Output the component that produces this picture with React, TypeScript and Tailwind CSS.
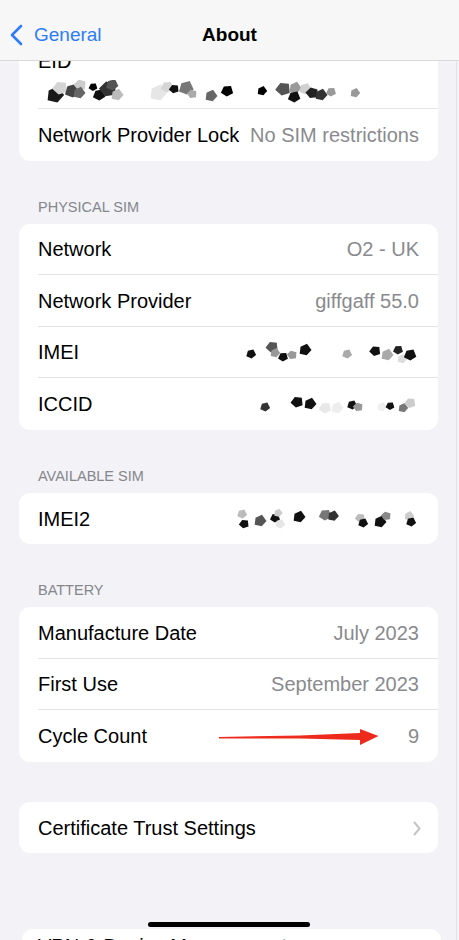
import type { ReactNode } from "react"

type Blob = [number, number, number, string, number]

const font = { fontFamily: '"Liberation Sans", Arial, sans-serif' }

function pentagon(cx: number, cy: number, r: number, rot: number) {
  const pts: string[] = []
  for (let i = 0; i < 5; i++) {
    const a = ((rot + i * 72) * Math.PI) / 180
    const rr = i % 2 === 0 ? r : r * 0.85
    pts.push(`${(cx + rr * Math.cos(a)).toFixed(1)},${(cy + rr * Math.sin(a)).toFixed(1)}`)
  }
  return pts.join(" ")
}

// redacted values: little grey/black shards
function Scribble({ blobs, box }: { blobs: Blob[]; box: [number, number, number, number] }) {
  const [x, y, w, h] = box
  return (
    <svg width={w} height={h} viewBox={`${x} ${y} ${w} ${h}`} className="block shrink-0">
      {blobs.map(([cx, cy, r, fill, rot], i) => (
        <polygon key={i} points={pentagon(cx, cy, r * 1.3, rot)} fill={fill} />
      ))}
    </svg>
  )
}

const eidBlobs: Blob[] = [
  [55, 96, 7, "#1a1a1a", 0], [60, 89, 6, "#d4d4d4", 30], [72, 92, 6, "#444", 10],
  [80, 86, 5, "#ccc", 40], [79, 94, 5, "#666", 0], [93, 88, 3.5, "#000", 20],
  [99, 96, 5, "#111", 15], [108, 90, 7, "#333", 40], [117, 96, 5, "#bbb", 0],
  [112, 86, 5, "#555", 10], [158, 94, 7, "#e6e6e6", 0], [167, 88, 5, "#d6d6d6", 20],
  [174, 90, 4, "#111", 30], [186, 89, 6, "#777", 10], [192, 95, 4, "#aaa", 40],
  [211, 97, 5, "#666", 0], [227, 92, 5, "#000", 20], [262, 92, 4, "#000", 0],
  [283, 90, 6, "#555", 30], [295, 89, 5, "#999", 0], [294, 98, 5, "#111", 15],
  [305, 90, 5, "#d0d0d0", 10], [312, 94, 5, "#222", 40], [321, 96, 5, "#333", 0],
  [331, 93, 4, "#999", 20], [355, 94, 4, "#999", 0],
]

const imeiBlobs: Blob[] = [
  [251, 353, 4, "#111", 10], [272, 346, 5, "#555", 30], [275, 352, 4, "#999", 0],
  [283, 356, 4, "#111", 20], [292, 354, 4, "#999", 40], [305, 349, 5, "#111", 0],
  [347, 353, 4, "#aaa", 10], [375, 350, 4.5, "#111", 30], [387, 354, 5, "#aaa", 0],
  [398, 349, 4, "#222", 20], [402, 358, 4, "#ddd", 0], [410, 354, 5, "#111", 15],
]

const iccidBlobs: Blob[] = [
  [265, 405, 4, "#333", 10], [297, 400, 5, "#111", 30], [310, 402, 5, "#111", 0],
  [325, 406, 5, "#e8e8e8", 20], [337, 406, 5, "#eee", 0], [352, 403, 4, "#111", 10],
  [358, 405, 4, "#999", 40], [382, 405, 4, "#eee", 0], [390, 404, 3.5, "#111", 20],
  [403, 406, 4, "#777", 0], [410, 401, 4.5, "#ccc", 30],
]

const imei2Blobs: Blob[] = [
  [242, 515, 4, "#bbb", 10], [244, 525, 4, "#111", 30], [260, 522, 5, "#555", 0],
  [275, 519, 4, "#111", 20], [278, 514, 3.5, "#ccc", 0], [280, 525, 4, "#e6e6e6", 10],
  [299, 518, 5, "#111", 0], [325, 516, 5, "#777", 20], [333, 517, 4.5, "#333", 0],
  [360, 519, 4, "#bbb", 30], [363, 524, 4, "#111", 10], [380, 523, 5, "#111", 0],
  [386, 517, 4, "#888", 40], [409, 517, 4, "#ccc", 0], [411, 523, 4, "#111", 10],
]

function Row({ label, value, last, children }: { label: string; value?: string; last?: boolean; children?: ReactNode }) {
  return (
    <div className="flex h-[51.5px] pl-[19px]">
      <div
        className={
          last
            ? "flex flex-1 items-center justify-between pt-[2px] pr-[19px]"
            : "flex flex-1 items-center justify-between border-b border-[#e3e3e7] pt-[2px] pr-[19px]"
        }
      >
        <span className="text-[20px] leading-[23px] text-black">{label}</span>
        {value && <span className="text-[20px] leading-[23px] text-[#8a8a8e]">{value}</span>}
        {children}
      </div>
    </div>
  )
}

function SectionTitle({ children }: { children: ReactNode }) {
  return (
    <div className="mt-[38px] mb-[8px] h-[17px] pl-[38px] text-[14.5px] leading-[17px] text-[#86868b]">{children}</div>
  )
}

function Card({ children }: { children: ReactNode }) {
  return <div className="mr-[18px] ml-[19px] overflow-hidden rounded-[11px] bg-white">{children}</div>
}

export default function App() {
  return (
    <div className="relative h-[940px] w-[459px] overflow-hidden bg-[#f2f2f7]" style={font}>
      <header className="grid h-[61px] grid-cols-[1fr_auto_1fr] items-center border-b border-[#dadada] bg-[#f7f7f7] pt-[9px]">
        <div className="flex items-center gap-[11px] pl-[10px] text-[#2f7cf6]">
          <svg width="13" height="22" viewBox="0 0 13 22" fill="none">
            <path d="M11 2 L2 11 L11 20" stroke="currentColor" strokeWidth="2.6" strokeLinecap="round" strokeLinejoin="round" />
          </svg>
          <span className="text-[19px] leading-[22px]">General</span>
        </div>
        <div className="text-[19px] leading-[22px] font-bold text-black">About</div>
        <div />
      </header>

      <div className="h-[879px] w-[457px] overflow-hidden border-r border-[#e4e2e8]">
        <div className="-mt-[23px]">
          <Card>
            <div className="pl-[19px]">
              <div className="border-b border-[#e3e3e7] pt-[12px] pb-[4px]">
                <div className="text-[20px] leading-[23px] text-black">EID</div>
                <div className="mt-[7px]">
                  <Scribble blobs={eidBlobs} box={[38, 81, 381, 24]} />
                </div>
              </div>
            </div>
            <Row label="Network Provider Lock" value="No SIM restrictions" last />
          </Card>

          <SectionTitle>PHYSICAL SIM</SectionTitle>
          <Card>
            <Row label="Network" value="O2 - UK" />
            <Row label="Network Provider" value="giffgaff 55.0" />
            <Row label="IMEI">
              <Scribble blobs={imeiBlobs} box={[239, 340, 180, 24]} />
            </Row>
            <Row label="ICCID" last>
              <Scribble blobs={iccidBlobs} box={[239, 391, 180, 24]} />
            </Row>
          </Card>

          <SectionTitle>AVAILABLE SIM</SectionTitle>
          <Card>
            <Row label="IMEI2" last>
              <Scribble blobs={imei2Blobs} box={[234, 507, 185, 26]} />
            </Row>
          </Card>

          <SectionTitle>BATTERY</SectionTitle>
          <Card>
            <Row label="Manufacture Date" value="July 2023" />
            <Row label="First Use" value="September 2023" />
            <Row label="Cycle Count" value="9" last />
          </Card>

          <div className="mt-[40px]">
            <Card>
              <Row label="Certificate Trust Settings" last>
                <svg width="8" height="15" viewBox="0 0 8 15" fill="none" className="-mr-[2px]">
                  <path d="M1.5 1.5 L6.5 7.5 L1.5 13.5" stroke="#c4c4c7" strokeWidth="2" strokeLinecap="round" strokeLinejoin="round" />
                </svg>
              </Row>
            </Card>
          </div>

          <div className="mt-[76px]">
            <div className="mr-[15px] ml-[22px] flex h-[40px] justify-between rounded-[11px] bg-white pt-[6px] pr-[19px] pl-[16px]">
              <span className="text-[20px] leading-[23px] text-black">VPN &amp; Device Management</span>
              <svg width="8" height="15" viewBox="0 0 8 15" fill="none" className="mt-[6px]">
                <path d="M1.5 1.5 L6.5 7.5 L1.5 13.5" stroke="#c4c4c7" strokeWidth="2" strokeLinecap="round" strokeLinejoin="round" />
              </svg>
            </div>
          </div>
        </div>
      </div>

      <svg className="absolute top-[727px] left-[217px]" width="164" height="20" viewBox="217 727 164 20">
        <polygon points="219,737 300,735.5 360,733 360,729 378.5,736 360,745 360,740 300,738.5 219,738.6" fill="#ee2a1c" />
      </svg>

      <div className="absolute top-[922px] left-[148px] h-[5px] w-[162px] rounded-full bg-black" />
    </div>
  )
}
